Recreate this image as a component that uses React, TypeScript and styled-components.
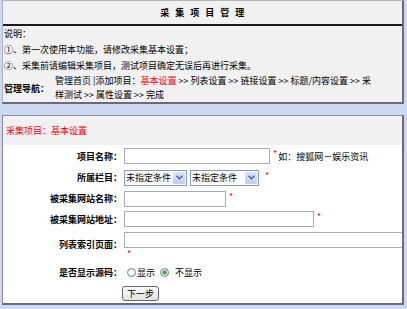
import React from 'react'
import styled, { createGlobalStyle } from 'styled-components'

const GlobalStyle = createGlobalStyle`
  html, body {
    margin: 0;
    padding: 0;
    background: #ccd8f4;
  }
  body {
    font-family: "Noto Sans CJK SC", "Liberation Sans", sans-serif;
    font-size: 9px;
    color: #000;
  }
`

const navItems = ['列表设置', '链接设置', '标题/内容设置']

const Chevron = () => (
  <svg width="7" height="5" viewBox="0 0 7 5">
    <path d="M0.5 0.8 L3.5 3.8 L6.5 0.8" fill="none" stroke="#4d6185" strokeWidth="1.4" />
  </svg>
)

export default function App() {
  return (
    <>
      <GlobalStyle />
      <S.Page>
        <S.Panel>
          <S.TitleBar>采 集 项 目 管 理</S.TitleBar>
          <S.Note>说明：</S.Note>
          <S.Note>①、第一次使用本功能，请修改采集基本设置；</S.Note>
          <S.Note>②、采集前请编辑采集项目，测试项目确定无误后再进行采集。</S.Note>
          <S.NavRow>
            <S.NavLabel>管理导航：</S.NavLabel>
            <S.NavLinks>
              管理首页 |添加项目：<S.Red>基本设置</S.Red>
              {navItems.map(item => ` >> ${item}`).join('')} &gt;&gt; 采<br />
              样测试 &gt;&gt; 属性设置 &gt;&gt; 完成
            </S.NavLinks>
          </S.NavRow>
        </S.Panel>

        <S.FormPanel>
          <S.FormHeader>采集项目：基本设置</S.FormHeader>
          <S.FormBody>
            <S.Row $h={22}>
              <S.Label>项目名称：</S.Label>
              <S.Cell>
                <S.Input $w={146} />
                <S.Star>*</S.Star>
                <span>如：搜狐网－娱乐资讯</span>
              </S.Cell>
            </S.Row>
            <S.Row $h={21}>
              <S.Label>所属栏目：</S.Label>
              <S.Cell>
                <S.SelectBox $w={63}>
                  <S.SelectText>未指定条件</S.SelectText>
                  <S.Arrow><Chevron /></S.Arrow>
                </S.SelectBox>
                <S.SelectBox $w={69}>
                  <S.SelectText>未指定条件</S.SelectText>
                  <S.Arrow><Chevron /></S.Arrow>
                </S.SelectBox>
                <S.Star>*</S.Star>
              </S.Cell>
            </S.Row>
            <S.Row $h={21}>
              <S.Label>被采集网站名称：</S.Label>
              <S.Cell>
                <S.Input $w={102} />
                <S.Star>*</S.Star>
              </S.Cell>
            </S.Row>
            <S.Row $h={20}>
              <S.Label>被采集网站地址：</S.Label>
              <S.Cell>
                <S.Input $w={190} />
                <S.Star>*</S.Star>
              </S.Cell>
            </S.Row>
            <S.Row $h={31}>
              <S.Label>列表索引页面：</S.Label>
              <S.StackCell>
                <S.Input $w={290} />
                <S.Star>*</S.Star>
              </S.StackCell>
            </S.Row>
            <S.Row $h={24}>
              <S.Label>是否显示源码：</S.Label>
              <S.Cell>
                <S.Radio type="radio" name="show" />
                <S.RadioText>显示</S.RadioText>
                <S.Radio type="radio" name="show" defaultChecked />
                <S.RadioText $gap={5}>不显示</S.RadioText>
              </S.Cell>
            </S.Row>
            <S.Row $h={19}>
              <span />
              <S.Cell>
                <S.Button>下一步</S.Button>
              </S.Cell>
            </S.Row>
          </S.FormBody>
        </S.FormPanel>
      </S.Page>
    </>
  )
}

const S = {
  Page: styled.div`
    width: 407px;
    height: 309px;
    box-sizing: border-box;
    padding: 0 3px 0 2px;
    display: flex;
    flex-direction: column;
    gap: 11px;
    overflow: hidden;
  `,
  Panel: styled.div`
    background: #f1f1f1;
    border-top: 1px solid #b4b4b4;
    border-left: 1px solid #a9b3c9;
    border-right: 2px solid #6b6b72;
    border-bottom: 2px solid #6b6b72;
    overflow: hidden;
  `,
  TitleBar: styled.div`
    height: 23px;
    line-height: 23px;
    text-align: center;
    font-weight: bold;
    white-space: pre;
    word-spacing: 3px;
    letter-spacing: .5px;
    border-bottom: 2px solid #1a1a1a;
  `,
  Note: styled.div`
    height: 16px;
    line-height: 16px;
    padding-left: 1px;
    white-space: nowrap;
  `,
  NavRow: styled.div`
    height: 28px;
    display: flex;
    align-items: center;
  `,
  NavLabel: styled.div`
    width: 51px;
    padding-left: 1px;
    font-weight: bold;
    white-space: nowrap;
  `,
  NavLinks: styled.div`
    line-height: 14px;
    white-space: pre;
  `,
  Red: styled.span`
    color: #ff0000;
  `,
  FormPanel: styled.div`
    background: #fff;
    border-top: 1px solid #8a8a92;
    border-left: 1px solid #8a8a92;
    border-right: 2px solid #6b6b72;
    border-bottom: 2px solid #6b6b72;
    overflow: hidden;
  `,
  FormHeader: styled.div`
    height: 29px;
    line-height: 29px;
    padding-left: 3px;
    background: #f1f1f1;
    color: #ff0000;
  `,
  FormBody: styled.div`
    display: flex;
    flex-direction: column;
  `,
  Row: styled.div<{ $h: number }>`
    height: ${p => p.$h}px;
    display: grid;
    grid-template-columns: 119px 1fr;
    column-gap: 2px;
    align-items: center;
  `,
  Label: styled.div`
    text-align: right;
    font-weight: bold;
    white-space: nowrap;
  `,
  Cell: styled.div`
    display: flex;
    align-items: center;
    white-space: nowrap;
  `,
  StackCell: styled.div`
    display: flex;
    flex-direction: column;
    align-items: flex-start;
    padding-top: 2px;
    line-height: 11px;
  `,
  Input: styled.input<{ $w: number }>`
    width: ${p => p.$w}px;
    height: 16px;
    box-sizing: border-box;
    margin: 0;
    padding: 0 2px;
    border: 1px solid #a5acb5;
    background: #fff;
    font: inherit;
  `,
  Star: styled.span`
    color: #ff0000;
    margin: 0 1px 0 3px;
    align-self: flex-start;
    line-height: 12px;
  `,
  SelectBox: styled.div<{ $w: number }>`
    width: ${p => p.$w}px;
    height: 16px;
    box-sizing: border-box;
    margin-right: 3px;
    display: flex;
    align-items: stretch;
    border: 1px solid #7f9db9;
    background: #fff;
  `,
  SelectText: styled.span`
    flex: 1;
    min-width: 0;
    padding-left: 1px;
    line-height: 14px;
    white-space: nowrap;
  `,
  Arrow: styled.span`
    flex: none;
    width: 12px;
    margin: 1px 1px 1px 0;
    display: flex;
    align-items: center;
    justify-content: center;
    background: linear-gradient(#d8e4fd, #b9cdf9);
    border-radius: 1px;
  `,
  Radio: styled.input`
    appearance: none;
    width: 9px;
    height: 9px;
    margin: 0 1px 0 3px;
    border: 1px solid #6b7a90;
    border-radius: 50%;
    background: radial-gradient(circle, #fff 40%, #e6e6e0 100%);
    &:checked {
      background: radial-gradient(circle, #3fb33f 0 2px, #fff 2.5px 60%, #e6e6e0 100%);
    }
  `,
  RadioText: styled.span<{ $gap?: number }>`
    margin-left: ${p => p.$gap ?? 0}px;
    margin-right: 2px;
  `,
  Button: styled.button`
    height: 15px;
    margin: 0 0 0 -2px;
    padding: 0 4px;
    border: 1px solid #5c6470;
    border-radius: 3px;
    background: linear-gradient(#fefefe, #e3e3dc);
    font: inherit;
    line-height: 13px;
    color: #000;
  `,
}
